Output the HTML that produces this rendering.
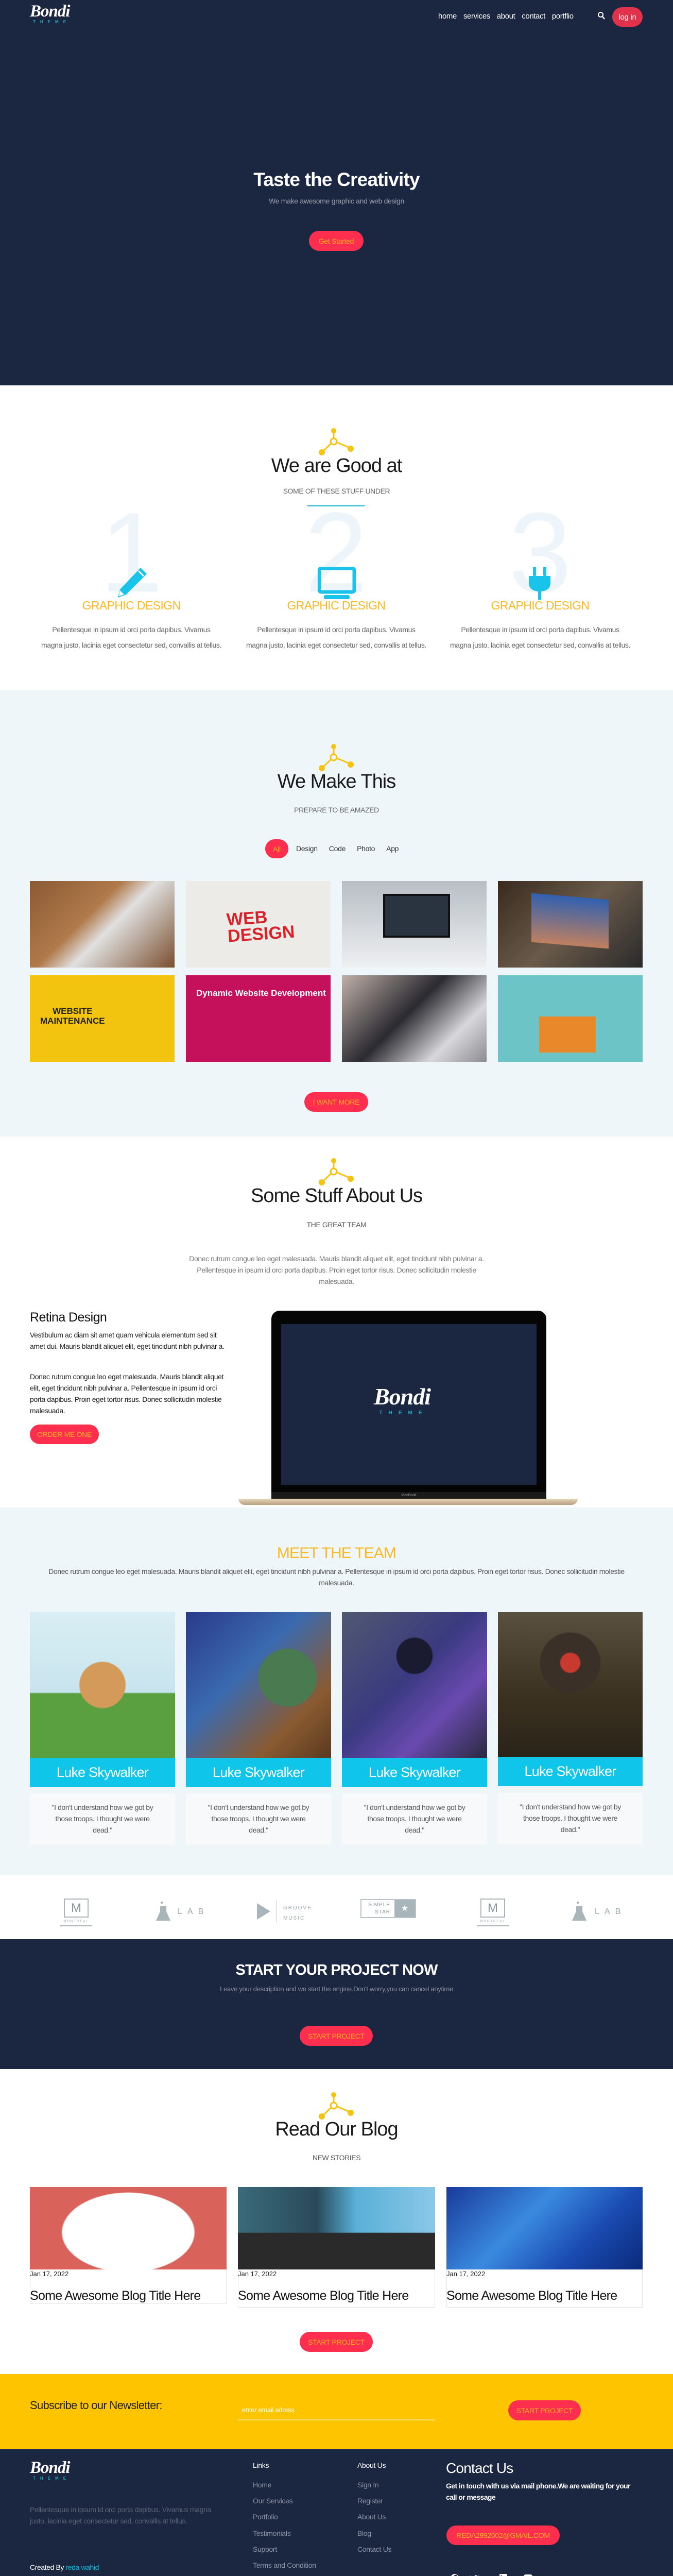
<!DOCTYPE html>
<html style="height:5061px;overflow:hidden"><head><meta charset="utf-8">
<style>
*{box-sizing:border-box;margin:0;padding:0}
html,body{width:1307px;height:5061px;overflow:hidden}
body{font-family:"Liberation Sans",sans-serif;background:#fff;position:relative;color:#222}
#w{position:relative;width:1307px;height:5061px;overflow:hidden}
.a{position:absolute}
.c{text-align:center;left:0;width:1307px}
.btn{position:absolute;background:#fe2f4e;color:#f7b11f;border-radius:22px;font-size:14px;display:flex;align-items:center;justify-content:center;letter-spacing:-.3px}
.navy{background:#1b2640}
.logo .b{font-family:"Liberation Serif",serif;font-style:italic;font-weight:bold;color:#fff;font-size:33px;letter-spacing:-1px}
.logo .t{color:#1aa8c0;font-size:8px;letter-spacing:9px;margin-left:6px;font-weight:bold}
.img{position:absolute;overflow:hidden}
</style></head><body><div id="w">

<!-- HERO -->
<div class="a navy" style="left:0;top:0;width:1307px;height:748px"></div>
<div class="a logo" style="left:58px;top:6px;line-height:1"><div class="b">Bondi</div><div class="t">THEME</div></div>
<div class="a" style="top:23px;left:851px;color:#fff;font-size:15px;display:flex;gap:13px;letter-spacing:-.4px"><span>home</span><span>services</span><span>about</span><span>contact</span><span>portflio</span></div>
<svg class="a" style="left:1160px;top:22px" width="16" height="18" viewBox="0 0 16 18"><circle cx="6.5" cy="6.5" r="4.5" fill="none" stroke="#fff" stroke-width="2"/><line x1="10" y1="10" x2="14" y2="15" stroke="#fff" stroke-width="2.5"/></svg>
<div class="btn" style="left:1189px;top:14px;width:59px;height:38px;background:#e0324a;color:#fff;font-size:15px">log in</div>
<div class="a c" style="top:328px;color:#fff;font-size:37px;font-weight:bold;letter-spacing:-.8px">Taste the Creativity</div>
<div class="a c" style="top:382px;color:#9aa0ab;font-size:14px;letter-spacing:-.3px">We make awesome graphic and web design</div>
<div class="btn" style="left:600px;top:448px;width:106px;height:39px">Get Started</div>

<!-- GOOD AT -->
<svg class="a" style="left:617px;top:830px" width="73" height="54" viewBox="0 0 73 54"><line x1="31" y1="6" x2="31" y2="26" stroke="#f6c312" stroke-width="3"/><line x1="31" y1="26" x2="8" y2="48" stroke="#f6c312" stroke-width="3"/><line x1="31" y1="26" x2="64" y2="40" stroke="#f6c312" stroke-width="3"/><circle cx="31" cy="6" r="5" fill="#f6c312"/><circle cx="8" cy="48" r="6" fill="#f6c312"/><circle cx="64" cy="41" r="6" fill="#f6c312"/><circle cx="31" cy="27" r="6" fill="#fff" stroke="#f6c312" stroke-width="3"/></svg>
<div class="a c" style="top:883px;font-size:38px;color:#1a1a1a;letter-spacing:-1px">We are Good at</div>
<div class="a c" style="top:945px;font-size:14px;color:#666;letter-spacing:-.4px">SOME OF THESE STUFF UNDER</div>
<div class="a" style="left:597px;top:980px;width:111px;height:3px;background:#4bc5d8"></div>
<div class="a" style="left:155px;top:962px;width:200px;text-align:center;font-size:220px;color:#eef5fa;line-height:1">1</div>
<div class="a" style="left:553px;top:962px;width:200px;text-align:center;font-size:220px;color:#eef5fa;line-height:1">2</div>
<div class="a" style="left:949px;top:962px;width:200px;text-align:center;font-size:220px;color:#eef5fa;line-height:1">3</div>
<svg class="a" style="left:225px;top:1100px" width="62" height="62" viewBox="0 0 62 62"><path d="M48 2 L60 14 L20 54 L4 60 L8 44 Z" fill="#19c3ea"/><path d="M8 46 L6 57 L16 54" fill="#fff"/><line x1="44" y1="8" x2="54" y2="18" stroke="#fff" stroke-width="3"/></svg>
<svg class="a" style="left:617px;top:1100px" width="74" height="64" viewBox="0 0 74 64"><rect x="3" y="3" width="68" height="46" rx="4" fill="none" stroke="#19c3ea" stroke-width="7"/><rect x="12" y="55" width="50" height="8" rx="3" fill="#19c3ea"/></svg>
<svg class="a" style="left:1027px;top:1100px" width="44" height="64" viewBox="0 0 44 64"><rect x="8" y="0" width="6" height="18" rx="2" fill="#19c3ea"/><rect x="28" y="0" width="6" height="18" rx="2" fill="#19c3ea"/><path d="M0 18 H42 V32 Q42 46 24 48 V64 H18 V48 Q0 46 0 32 Z" fill="#19c3ea"/></svg>
<div class="a" style="left:100px;top:1162px;width:310px;text-align:center;font-size:23px;color:#f7b924;letter-spacing:-.6px">GRAPHIC DESIGN</div>
<div class="a" style="left:498px;top:1162px;width:310px;text-align:center;font-size:23px;color:#f7b924;letter-spacing:-.6px">GRAPHIC DESIGN</div>
<div class="a" style="left:894px;top:1162px;width:310px;text-align:center;font-size:23px;color:#f7b924;letter-spacing:-.6px">GRAPHIC DESIGN</div>
<div class="a" style="left:80px;top:1207px;width:350px;text-align:center;font-size:14px;line-height:30px;color:#666;letter-spacing:-.4px">Pellentesque in ipsum id orci porta dapibus. Vivamus magna justo, lacinia eget consectetur sed, convallis at tellus.</div>
<div class="a" style="left:478px;top:1207px;width:350px;text-align:center;font-size:14px;line-height:30px;color:#666;letter-spacing:-.4px">Pellentesque in ipsum id orci porta dapibus. Vivamus magna justo, lacinia eget consectetur sed, convallis at tellus.</div>
<div class="a" style="left:874px;top:1207px;width:350px;text-align:center;font-size:14px;line-height:30px;color:#666;letter-spacing:-.4px">Pellentesque in ipsum id orci porta dapibus. Vivamus magna justo, lacinia eget consectetur sed, convallis at tellus.</div>

<!-- WE MAKE THIS -->
<div class="a" style="left:0;top:1340px;width:1307px;height:866px;background:#eff6fa"></div>
<svg class="a" style="left:617px;top:1443px" width="73" height="54" viewBox="0 0 73 54"><line x1="31" y1="6" x2="31" y2="26" stroke="#f6c312" stroke-width="3"/><line x1="31" y1="26" x2="8" y2="48" stroke="#f6c312" stroke-width="3"/><line x1="31" y1="26" x2="64" y2="40" stroke="#f6c312" stroke-width="3"/><circle cx="31" cy="6" r="5" fill="#f6c312"/><circle cx="8" cy="48" r="6" fill="#f6c312"/><circle cx="64" cy="41" r="6" fill="#f6c312"/><circle cx="31" cy="27" r="6" fill="#eff6fa" stroke="#f6c312" stroke-width="3"/></svg>
<div class="a c" style="top:1496px;font-size:38px;color:#1a1a1a;letter-spacing:-1px">We Make This</div>
<div class="a c" style="top:1564px;font-size:14px;color:#666;letter-spacing:-.4px">PREPARE TO BE AMAZED</div>
<div class="btn" style="left:515px;top:1629px;width:45px;height:37px;color:#f7b11f">All</div>
<div class="a" style="left:575px;top:1639px;font-size:14px;color:#333;display:flex;gap:22px;letter-spacing:-.3px"><span>Design</span><span>Code</span><span>Photo</span><span>App</span></div>
<div class="img" style="left:58px;top:1710px;width:281px;height:168px;background:linear-gradient(135deg,#8a5a35,#b07a4a 40%,#e0e0e0 55%,#7a4e2e)"></div>
<div class="img" style="left:361px;top:1710px;width:281px;height:168px;background:#ecebe7"><div style="position:absolute;left:80px;top:55px;color:#d8232a;font-size:34px;font-weight:bold;line-height:32px;transform:rotate(-4deg)">WEB<br>DESIGN</div></div>
<div class="img" style="left:664px;top:1710px;width:281px;height:168px;background:linear-gradient(#b8bec4,#eef0f2)"><div style="position:absolute;left:80px;top:25px;width:130px;height:85px;background:#2a3440;border:4px solid #111"></div></div>
<div class="img" style="left:967px;top:1710px;width:281px;height:168px;background:linear-gradient(135deg,#3a2a1e,#6a5a4a 50%,#2a2a2a)"><div style="position:absolute;left:65px;top:30px;width:150px;height:95px;background:linear-gradient(#3060b0,#c08060);transform:skewY(5deg)"></div></div>
<div class="img" style="left:58px;top:1893px;width:281px;height:168px;background:#f2c40f"><div style="position:absolute;left:20px;top:60px;font-weight:bold;font-size:17px;line-height:19px;color:#222;text-align:center">WEBSITE<br>MAINTENANCE</div></div>
<div class="img" style="left:361px;top:1893px;width:281px;height:168px;background:#c5105b"><div style="position:absolute;left:20px;top:25px;color:#fff;font-weight:bold;font-size:17px">Dynamic Website Development</div></div>
<div class="img" style="left:664px;top:1893px;width:281px;height:168px;background:linear-gradient(135deg,#c0b0a8,#2a2a30 45%,#d8d8dc 75%,#8a8a90)"></div>
<div class="img" style="left:967px;top:1893px;width:281px;height:168px;background:#6cc4c6"><div style="position:absolute;left:80px;top:80px;width:110px;height:70px;background:#e8882a"></div></div>
<div class="btn" style="left:591px;top:2120px;width:124px;height:38px">I WANT MORE</div>

<!-- ABOUT -->
<svg class="a" style="left:617px;top:2247px" width="73" height="54" viewBox="0 0 73 54"><line x1="31" y1="6" x2="31" y2="26" stroke="#f6c312" stroke-width="3"/><line x1="31" y1="26" x2="8" y2="48" stroke="#f6c312" stroke-width="3"/><line x1="31" y1="26" x2="64" y2="40" stroke="#f6c312" stroke-width="3"/><circle cx="31" cy="6" r="5" fill="#f6c312"/><circle cx="8" cy="48" r="6" fill="#f6c312"/><circle cx="64" cy="41" r="6" fill="#f6c312"/><circle cx="31" cy="27" r="6" fill="#fff" stroke="#f6c312" stroke-width="3"/></svg>
<div class="a c" style="top:2300px;font-size:38px;color:#1a1a1a;letter-spacing:-1px">Some Stuff About Us</div>
<div class="a c" style="top:2369px;font-size:14px;color:#555;letter-spacing:-.4px">THE GREAT TEAM</div>
<div class="a" style="left:360px;top:2432px;width:587px;text-align:center;font-size:14px;line-height:22px;color:#777;letter-spacing:-.4px">Donec rutrum congue leo eget malesuada. Mauris blandit aliquet elit, eget tincidunt nibh pulvinar a. Pellentesque in ipsum id orci porta dapibus. Proin eget tortor risus. Donec sollicitudin molestie malesuada.</div>
<div class="a" style="left:58px;top:2543px;font-size:25px;color:#111;letter-spacing:-.6px">Retina Design</div>
<div class="a" style="left:58px;top:2580px;width:385px;font-size:14px;line-height:22px;color:#222;letter-spacing:-.4px">Vestibulum ac diam sit amet quam vehicula elementum sed sit amet dui. Mauris blandit aliquet elit, eget tincidunt nibh pulvinar a.</div>
<div class="a" style="left:58px;top:2661px;width:385px;font-size:14px;line-height:22px;color:#222;letter-spacing:-.4px">Donec rutrum congue leo eget malesuada. Mauris blandit aliquet elit, eget tincidunt nibh pulvinar a. Pellentesque in ipsum id orci porta dapibus. Proin eget tortor risus. Donec sollicitudin molestie malesuada.</div>
<div class="btn" style="left:58px;top:2765px;width:134px;height:38px">ORDER ME ONE</div>
<div class="a" style="left:527px;top:2544px;width:534px;height:370px;background:#050505;border-radius:16px 16px 0 0"></div>
<div class="a navy" style="left:546px;top:2570px;width:496px;height:312px"></div>
<div class="a logo" style="left:726px;top:2688px;line-height:1;text-align:center"><div class="b" style="font-size:46px">Bondi</div><div class="t" style="font-size:10px;letter-spacing:12px;margin-top:4px">THEME</div></div>
<div class="a" style="left:527px;top:2896px;width:534px;height:14px;background:#1a1a1a;color:#999;font-size:7px;text-align:center;line-height:14px">MacBook</div>
<div class="a" style="left:463px;top:2909px;width:659px;height:12px;background:linear-gradient(#e8d6bc,#b89e7e);border-radius:0 0 40px 40px"></div>

<!-- TEAM -->
<div class="a" style="left:0;top:2926px;width:1307px;height:714px;background:#eff6fa"></div>
<div class="a c" style="top:2998px;font-size:30px;color:#f7b924;letter-spacing:-.8px">MEET THE TEAM</div>
<div class="a" style="left:75px;top:3039px;width:1157px;text-align:center;font-size:14px;line-height:22px;color:#555;letter-spacing:-.4px">Donec rutrum congue leo eget malesuada. Mauris blandit aliquet elit, eget tincidunt nibh pulvinar a. Pellentesque in ipsum id orci porta dapibus. Proin eget tortor risus. Donec sollicitudin molestie malesuada.</div>
<div class="img" style="left:58px;top:3129px;width:282px;height:283px;background:radial-gradient(circle at 50% 50%,#d49a5a 0 22%,transparent 23%),linear-gradient(#d9eef4,#c8e4ee 55%,#5aa040 56%)"></div>
<div class="img" style="left:361px;top:3129px;width:282px;height:283px;background:radial-gradient(circle at 70% 45%,#4a7a50 0 22%,transparent 23%),linear-gradient(135deg,#2a3a8a,#3a6ab0 40%,#8a5a30 75%,#5a3a20)"></div>
<div class="img" style="left:664px;top:3129px;width:282px;height:283px;background:radial-gradient(circle at 50% 30%,#1a1a30 0 14%,transparent 15%),linear-gradient(135deg,#505870,#3a3a80 45%,#6a4ab0 70%,#2a2a40)"></div>
<div class="img" style="left:967px;top:3129px;width:281px;height:281px;background:radial-gradient(circle at 50% 35%,#c83a30 0 8%,#3a3028 9% 25%,transparent 26%),linear-gradient(#5a5040,#3a3020 60%,#2a2418)"></div>
<div class="a" style="left:58px;top:3412px;width:282px;height:57px;background:#0fc6ea;color:#fff;font-size:27px;text-align:center;line-height:57px;letter-spacing:-.8px">Luke Skywalker</div>
<div class="a" style="left:361px;top:3412px;width:282px;height:57px;background:#0fc6ea;color:#fff;font-size:27px;text-align:center;line-height:57px;letter-spacing:-.8px">Luke Skywalker</div>
<div class="a" style="left:664px;top:3412px;width:282px;height:57px;background:#0fc6ea;color:#fff;font-size:27px;text-align:center;line-height:57px;letter-spacing:-.8px">Luke Skywalker</div>
<div class="a" style="left:967px;top:3410px;width:281px;height:57px;background:#0fc6ea;color:#fff;font-size:27px;text-align:center;line-height:57px;letter-spacing:-.8px">Luke Skywalker</div>
<div class="a" style="left:58px;top:3481px;width:282px;height:100px;background:#f7f9fb;padding:16px 30px;text-align:center;font-size:14px;line-height:22px;color:#555;letter-spacing:-.4px">"I don't understand how we got by those troops. I thought we were dead."</div>
<div class="a" style="left:361px;top:3481px;width:282px;height:100px;background:#f7f9fb;padding:16px 30px;text-align:center;font-size:14px;line-height:22px;color:#555;letter-spacing:-.4px">"I don't understand how we got by those troops. I thought we were dead."</div>
<div class="a" style="left:664px;top:3481px;width:282px;height:100px;background:#f7f9fb;padding:16px 30px;text-align:center;font-size:14px;line-height:22px;color:#555;letter-spacing:-.4px">"I don't understand how we got by those troops. I thought we were dead."</div>
<div class="a" style="left:967px;top:3480px;width:281px;height:100px;background:#f7f9fb;padding:16px 30px;text-align:center;font-size:14px;line-height:22px;color:#555;letter-spacing:-.4px">"I don't understand how we got by those troops. I thought we were dead."</div>

<!-- LOGOS -->
<div class="a" style="left:124px;top:3685px;width:48px;height:37px;border:2px solid #aab4ba;color:#8a969c;font-size:24px;text-align:center;line-height:34px">M</div>
<div class="a" style="left:117px;top:3727px;width:62px;text-align:center;font-size:6px;letter-spacing:2px;color:#9aa4aa;border-bottom:2px solid #aab4ba;padding-bottom:4px">MONTREAL</div>
<svg class="a" style="left:302px;top:3690px" width="30" height="40" viewBox="0 0 30 40"><circle cx="12" cy="3" r="2" fill="#9aa8ae"/><path d="M9 10 H21 V20 L29 38 H1 L9 20 Z" fill="#a8b6bc"/></svg>
<div class="a" style="left:345px;top:3702px;font-size:16px;letter-spacing:10px;color:#9aa4aa">LAB</div>
<svg class="a" style="left:497px;top:3692px" width="32" height="36"><path d="M2 2 L28 18 L2 34 Z" fill="#a8b6bc"/></svg>
<div class="a" style="left:536px;top:3688px;width:1px;height:44px;background:#ccd"></div>
<div class="a" style="left:550px;top:3694px;font-size:10px;letter-spacing:2px;color:#9aa4aa;line-height:20px">GROOVE<br>MUSIC</div>
<div class="a" style="left:700px;top:3686px;width:108px;height:37px;border:2px solid #b8c2c8;display:flex"><div style="flex:1;font-size:10px;color:#8a969c;text-align:right;padding:3px 8px;line-height:14px;letter-spacing:1px">SIMPLE<br>STAR</div><div style="width:40px;background:#a8b6bc;color:#fff;text-align:center;line-height:33px">★</div></div>
<div class="a" style="left:933px;top:3685px;width:48px;height:37px;border:2px solid #aab4ba;color:#8a969c;font-size:24px;text-align:center;line-height:34px">M</div>
<div class="a" style="left:926px;top:3727px;width:62px;text-align:center;font-size:6px;letter-spacing:2px;color:#9aa4aa;border-bottom:2px solid #aab4ba;padding-bottom:4px">MONTREAL</div>
<svg class="a" style="left:1110px;top:3690px" width="30" height="40" viewBox="0 0 30 40"><circle cx="12" cy="3" r="2" fill="#9aa8ae"/><path d="M9 10 H21 V20 L29 38 H1 L9 20 Z" fill="#a8b6bc"/></svg>
<div class="a" style="left:1155px;top:3702px;font-size:16px;letter-spacing:10px;color:#9aa4aa">LAB</div>

<!-- START PROJECT -->
<div class="a navy" style="left:0;top:3764px;width:1307px;height:252px"></div>
<div class="a c" style="top:3808px;font-size:29px;color:#fff;font-weight:bold;letter-spacing:-.8px">START YOUR PROJECT NOW</div>
<div class="a c" style="top:3853px;font-size:13px;color:#8a909c;letter-spacing:-.3px">Leave your description and we start the engine.Don't worry,you can cancel anytime</div>
<div class="btn" style="left:582px;top:3932px;width:142px;height:39px">START PROJECT</div>

<!-- BLOG -->
<svg class="a" style="left:617px;top:4060px" width="73" height="54" viewBox="0 0 73 54"><line x1="31" y1="6" x2="31" y2="26" stroke="#f6c312" stroke-width="3"/><line x1="31" y1="26" x2="8" y2="48" stroke="#f6c312" stroke-width="3"/><line x1="31" y1="26" x2="64" y2="40" stroke="#f6c312" stroke-width="3"/><circle cx="31" cy="6" r="5" fill="#f6c312"/><circle cx="8" cy="48" r="6" fill="#f6c312"/><circle cx="64" cy="41" r="6" fill="#f6c312"/><circle cx="31" cy="27" r="6" fill="#fff" stroke="#f6c312" stroke-width="3"/></svg>
<div class="a c" style="top:4112px;font-size:38px;color:#1a1a1a;letter-spacing:-1px">Read Our Blog</div>
<div class="a c" style="top:4180px;font-size:14px;color:#555;letter-spacing:-.4px">NEW STORIES</div>
<div class="a" style="left:58px;top:4245px;width:382px;height:227px;border:1px solid #e4e4e4"></div>
<div class="a" style="left:462px;top:4245px;width:383px;height:234px;border:1px solid #e4e4e4"></div>
<div class="a" style="left:867px;top:4245px;width:381px;height:234px;border:1px solid #e4e4e4"></div>
<div class="img" style="left:58px;top:4245px;width:382px;height:160px;background:radial-gradient(ellipse 130px 78px at 50% 55%,#fff 98%,transparent 100%),#d9625a"></div>
<div class="img" style="left:462px;top:4245px;width:383px;height:160px;background:linear-gradient(180deg,transparent 55%,#2a2a2a 56%),linear-gradient(90deg,#3a6a7a,#2a4a5a 40%,#5ab0d8 60%,#8ac8e8)"></div>
<div class="img" style="left:867px;top:4245px;width:381px;height:160px;background:linear-gradient(135deg,#1a3a9a,#3a8ae0 40%,#1a4ab0 70%,#0a2a7a)"></div>
<div class="a" style="left:58px;top:4406px;font-size:13px;color:#222">Jan 17, 2022</div>
<div class="a" style="left:462px;top:4406px;font-size:13px;color:#222">Jan 17, 2022</div>
<div class="a" style="left:867px;top:4406px;font-size:13px;color:#222">Jan 17, 2022</div>
<div class="a" style="left:58px;top:4442px;font-size:25px;color:#111;letter-spacing:-.7px">Some Awesome Blog Title Here</div>
<div class="a" style="left:462px;top:4442px;font-size:25px;color:#111;letter-spacing:-.7px">Some Awesome Blog Title Here</div>
<div class="a" style="left:867px;top:4442px;font-size:25px;color:#111;letter-spacing:-.7px">Some Awesome Blog Title Here</div>
<div class="btn" style="left:582px;top:4526px;width:142px;height:39px">START PROJECT</div>

<!-- NEWSLETTER -->
<div class="a" style="left:0;top:4608px;width:1307px;height:146px;background:#fec400"></div>
<div class="a" style="left:58px;top:4656px;font-size:22px;color:#222;letter-spacing:-.7px">Subscribe to our Newsletter:</div>
<div class="a" style="left:470px;top:4670px;font-size:13px;color:#fff;letter-spacing:-.3px">enter email adress</div>
<div class="a" style="left:462px;top:4696px;width:383px;height:2px;background:#f5e07a"></div>
<div class="btn" style="left:987px;top:4659px;width:141px;height:39px">START PROJECT</div>

<!-- FOOTER -->
<div class="a navy" style="left:0;top:4754px;width:1307px;height:307px"></div>
<div class="a logo" style="left:58px;top:4774px;line-height:1"><div class="b">Bondi</div><div class="t">THEME</div></div>
<div class="a" style="left:58px;top:4860px;width:360px;font-size:14px;line-height:22px;color:#5a6478;letter-spacing:-.4px">Pellentesque in ipsum id orci porta dapibus. Vivamus magna justo, lacinia eget consectetur sed, convallis at tellus.</div>
<div class="a" style="left:58px;top:4972px;font-size:14px;line-height:22px;color:#fff;letter-spacing:-.4px">Created By <span style="color:#19b8e0">reda wahid</span><br>© 2022 -<span style="color:#f7b924">Bondi Inc</span></div>
<div class="a" style="left:491px;top:4777px;font-size:14px;color:#fff;letter-spacing:-.3px">Links</div>
<div class="a" style="left:491px;top:4808px;font-size:14px;line-height:31.2px;color:#8a92a4;letter-spacing:-.3px">Home<br>Our Services<br>Portfolio<br>Testimonials<br>Support<br>Terms and Condition</div>
<div class="a" style="left:694px;top:4777px;font-size:14px;color:#fff;letter-spacing:-.3px">About Us</div>
<div class="a" style="left:694px;top:4808px;font-size:14px;line-height:31.2px;color:#8a92a4;letter-spacing:-.3px">Sign In<br>Register<br>About Us<br>Blog<br>Contact Us</div>
<div class="a" style="left:866px;top:4775px;font-size:28px;color:#fff;letter-spacing:-.8px">Contact Us</div>
<div class="a" style="left:866px;top:4814px;width:370px;font-size:14px;line-height:22px;color:#fff;font-weight:bold;letter-spacing:-.6px">Get in touch with us via mail phone.We are waiting for your call or message</div>
<div class="btn" style="left:867px;top:4902px;width:220px;height:38px">REDA2992002@GMAIL.COM</div>
<svg class="a" style="left:874px;top:4995px" width="170" height="18" viewBox="0 0 170 18"><circle cx="9" cy="9" r="8" fill="#fff"/><path d="M10 17 V10 H12.5 L13 7.5 H10 V6 Q10 5 11 5 H13 V2.8 H10.5 Q7.5 2.8 7.5 6 V7.5 H5.5 V10 H7.5 V17 Z" fill="#1b2640"/><path d="M57 4 Q55 5 53 5 Q50 2 47 5 Q46 7 47 8 Q42 8 39 4 Q38 8 41 10 L39 10 Q40 13 43 13 Q41 15 37 15 Q44 19 51 14 Q56 10 56 5 Z" fill="#fff"/><rect x="96" y="1" width="15" height="16" rx="2" fill="#fff"/><rect x="98.5" y="7" width="2" height="8" fill="#1b2640"/><circle cx="99.5" cy="4.5" r="1.2" fill="#1b2640"/><path d="M102.5 7 H104.5 V8 Q105.5 6.8 107 6.8 Q109 7 109 10 V15 H107 V10.5 Q107 9 105.8 9 Q104.5 9 104.5 10.5 V15 H102.5 Z" fill="#1b2640"/><rect x="143" y="2" width="17" height="14" rx="4" fill="#fff"/><path d="M149 5.5 L155 9 L149 12.5 Z" fill="#1b2640"/></svg>
</div></body></html>
